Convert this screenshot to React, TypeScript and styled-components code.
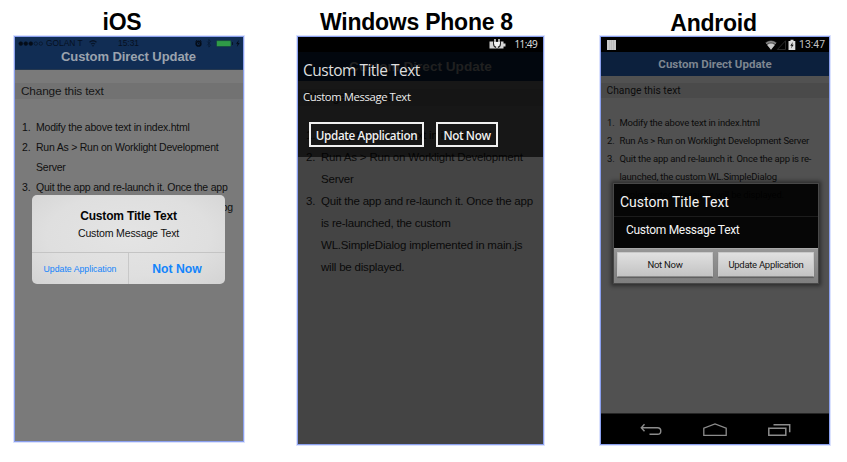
import React from "react";
import styled, { createGlobalStyle } from "styled-components";

const Global = createGlobalStyle`
  body { margin: 0; background: #fff; }
  * { box-sizing: border-box; }
`;

const ARIAL = '"Liberation Sans", Arial, sans-serif';
const SEGOE = '"Open Sans", "Noto Sans", sans-serif';
const ROBOTO = 'Roboto, "Noto Sans", sans-serif';

/* ---------- shared layout ---------- */

const Page = styled.main`
  width: 847px;
  height: 462px;
  overflow: hidden;
  display: grid;
  grid-template-columns: 230px 247px 230px;
  column-gap: 53px;
  padding-left: 14px;
  align-items: start;
  background: #fff;
`;

const Column = styled.section<{ $shift?: number }>`
  display: flex;
  flex-direction: column;
  margin-left: ${(p) => p.$shift ?? 0}px;
  width: 100%;
`;

const Platform = styled.h2<{ $inset: number; $drop?: number }>`
  margin: 0;
  height: 36px;
  padding: ${(p) => 9 + (p.$drop ?? 0)}px ${(p) => p.$inset}px 0 0;
  font: bold 23px/26px ${ARIAL};
  letter-spacing: -0.25px;
  text-align: center;
  white-space: nowrap;
  color: #000;
`;

const Phone = styled.div<{ $height: number; $bg: string; $font: string }>`
  position: relative;
  display: flex;
  flex-direction: column;
  height: ${(p) => p.$height}px;
  border: 1px solid #8ba0ee;
  box-shadow: 0 0 0 1px #dbe2fd;
  background: ${(p) => p.$bg};
  font-family: ${(p) => p.$font};
  overflow: hidden;
  white-space: nowrap;
`;

const AppHeader = styled.header<{ $h: number; $bg: string; $color: string; $size: number; $top?: number; $track?: number }>`
  flex: none;
  height: ${(p) => p.$h}px;
  padding-top: ${(p) => p.$top ?? 0}px;
  background: ${(p) => p.$bg};
  color: ${(p) => p.$color};
  font-size: ${(p) => p.$size}px;
  font-weight: bold;
  line-height: ${(p) => p.$h - (p.$top ?? 0)}px;
  letter-spacing: ${(p) => p.$track ?? 0}px;
  text-align: center;
`;

const Banner = styled.div<{ $top: number; $h: number; $bg: string; $size: number; $left: number; $color: string; $track?: number }>`
  flex: none;
  margin-top: ${(p) => p.$top}px;
  height: ${(p) => p.$h}px;
  line-height: ${(p) => p.$h}px;
  padding-left: ${(p) => p.$left}px;
  background: ${(p) => p.$bg};
  font-size: ${(p) => p.$size}px;
  letter-spacing: ${(p) => p.$track ?? 0}px;
  color: ${(p) => p.$color};
`;

const Steps = styled.ol<{ $top: number; $left: number; $num: number; $line: number; $size: number; $color: string; $track?: number }>`
  list-style: none;
  margin: ${(p) => p.$top}px 0 0;
  padding: 0 0 0 ${(p) => p.$left}px;
  font-size: ${(p) => p.$size}px;
  line-height: ${(p) => p.$line}px;
  letter-spacing: ${(p) => p.$track ?? 0}px;
  color: ${(p) => p.$color};
  li {
    display: grid;
    grid-template-columns: ${(p) => p.$num}px 1fr;
  }
`;

const StepText = styled.span`
  white-space: pre;
`;

function StepList({ steps, ...style }: { steps: string[] } & React.ComponentProps<typeof Steps>) {
  return (
    <Steps {...style}>
      {steps.map((text, i) => (
        <li key={i}>
          <span>{i + 1}.</span>
          <StepText>{text}</StepText>
        </li>
      ))}
    </Steps>
  );
}

/* ---------- iOS ---------- */

const IosHeader = styled.header`
  flex: none;
  height: 33px;
  background: #112d54;
  border-bottom: 1px solid #24374f;
`;

const IosStatus = styled.div`
  display: grid;
  grid-template-columns: 29px 43px 29px 76px 1fr;
  height: 12px;
  padding-left: 2px;
  align-items: center;
  font-size: 8.4px;
  line-height: 12px;
  color: #06101f;
  svg { display: block; }
`;

const IosTitle = styled.div`
  padding-right: 1px;
  font-weight: bold;
  font-size: 13px;
  letter-spacing: -0.08px;
  line-height: 15px;
  text-align: center;
  color: #9ba3ae;
`;

const IosAlert = styled.div`
  position: absolute;
  left: 17px;
  top: 158px;
  width: 193px;
  height: 89px;
  border-radius: 5px;
  background: radial-gradient(ellipse at 50% 45%, #e4e4e4 0%, #dfdfdf 60%, #d3d3d3 100%);
  display: flex;
  flex-direction: column;
  text-align: center;
  color: #111;
`;

const IosAlertText = styled.div`
  height: 57px;
  padding-top: 13px;
`;

const IosAlertTitle = styled.div`
  font: bold 12px/16px ${ARIAL};
  letter-spacing: -0.18px;
  color: #050505;
`;

const IosAlertMessage = styled.div`
  font: 10.6px/18px ${ARIAL};
  letter-spacing: -0.18px;
`;

const IosActions = styled.div`
  flex: 1;
  display: grid;
  grid-template-columns: 96px 1fr;
  border-top: 1px solid #c4c4c4;
`;

const IosAction = styled.button<{ $strong?: boolean }>`
  border: 0;
  border-left: ${(p) => (p.$strong ? "1px solid #c8c8c8" : "0")};
  padding: 0;
  background: none;
  color: #1384fb;
  font-family: ${ARIAL};
  font-size: ${(p) => (p.$strong ? 12.2 : 8.75)}px;
  font-weight: ${(p) => (p.$strong ? "bold" : "normal")};
`;

/* ---------- Windows Phone ---------- */

const WpStatus = styled.div`
  flex: none;
  height: 15px;
  display: flex;
  justify-content: flex-end;
  align-items: center;
  gap: 9px;
  padding-right: 6px;
  background: #000;
  color: #e0e0e0;
  font: 10px/15px ${SEGOE};
  letter-spacing: -0.6px;
`;

const WpDialog = styled.div`
  position: absolute;
  left: 0;
  top: 15px;
  width: 245px;
  height: 105px;
  padding: 7px 0 0 5px;
  background: rgba(0, 0, 0, 0.66);
  font-family: ${SEGOE};
  color: #ececec;
`;

const WpTitle = styled.div`
  font-size: 15.5px;
  font-weight: 400;
  line-height: 22px;
  letter-spacing: -0.5px;
  color: #dedede;
`;

const WpMessage = styled.div`
  margin-top: 7px;
  font-size: 11.3px;
  line-height: 18px;
  letter-spacing: -0.4px;
`;

const WpActions = styled.div`
  display: flex;
  gap: 12px;
  margin: 16px 0 0 6px;
`;

const WpButton = styled.button<{ $w: number }>`
  width: ${(p) => p.$w}px;
  height: 25px;
  padding: 0;
  border: 2px solid #f0f0f0;
  background: transparent;
  color: #f0f0f0;
  font: 600 11.7px/20px ${SEGOE};
  letter-spacing: -0.38px;
  white-space: nowrap;
`;

/* ---------- Android ---------- */

const AndroidStatus = styled.div`
  flex: none;
  height: 15px;
  display: flex;
  align-items: center;
  padding: 0 4px 0 6px;
  background: #000;
  color: #c2c2c2;
  font: 10.4px/15px ${ROBOTO};
  svg { display: block; }
`;

const Spacer = styled.span`
  flex: 1;
`;

const AndroidClock = styled.span`
  margin-left: 3px;
`;

const AndroidDialog = styled.div`
  position: absolute;
  left: 12px;
  top: 146px;
  width: 206px;
  height: 101px;
  border: 1px solid #484848;
  display: flex;
  flex-direction: column;
  background: rgba(0, 0, 0, 0.92);
  box-shadow: 0 0 4px 2px rgba(0, 0, 0, 0.45);
  color: #f4f4f4;
`;

const AndroidTitle = styled.div`
  height: 33px;
  padding: 2px 0 0 6px;
  border-bottom: 1px solid #1c1c1c;
  font-size: 14px;
  line-height: 33px;
`;

const AndroidMessage = styled.div`
  height: 31px;
  padding-left: 12px;
  font-size: 12px;
  line-height: 26px;
  letter-spacing: -0.3px;
`;

const AndroidActions = styled.div`
  flex: 1;
  display: grid;
  grid-template-columns: 96px 96px;
  column-gap: 5px;
  padding: 3px 0 6px 3px;
  border-top: 1px solid #a8a8a8;
  background: linear-gradient(#969696, #7f7f7f);
`;

const AndroidButton = styled.button`
  padding: 0;
  border: 1px solid #c9c9c9;
  border-bottom-color: #8a8a8a;
  border-radius: 1px;
  background: linear-gradient(#e0e0e0, #c3c3c3);
  box-shadow: 0 1px 1px rgba(0, 0, 0, 0.3);
  color: #161616;
  font: 9.5px/22px ${ROBOTO};
  letter-spacing: -0.28px;
`;

const NavBar = styled.nav`
  margin-top: auto;
  height: 31px;
  display: flex;
  justify-content: center;
  align-items: center;
  gap: 41px;
  padding-top: 1px;
  border-top: 1px solid #252525;
  background: #000;
`;

/* ---------- icons ---------- */

const SignalDots = () => (
  <svg width="28" height="12" viewBox="0 0 28 12" fill="#040c18" stroke="#06101f" strokeWidth=".6">
    <circle cx="3.8" cy="6.6" r="1.9" />
    <circle cx="8.8" cy="6.6" r="1.9" />
    <circle cx="13.8" cy="6.6" r="1.9" />
    <circle cx="18.8" cy="6.6" r="1.7" fill="none" />
    <circle cx="23.8" cy="6.6" r="1.7" fill="none" />
  </svg>
);

const IosWifi = () => (
  <svg width="8" height="12" viewBox="0 0 8 12" fill="none" stroke="#071426" strokeWidth="1.2">
    <path d="M.5 5.3Q4 2.2 7.5 5.3M2 7.1Q4 5.4 6 7.1" />
    <path d="M3.1 8.3h1.8L4 9.6z" fill="#071426" strokeWidth=".3" />
  </svg>
);

const IosIndicators = () => (
  <svg width="48" height="12" viewBox="0 0 48 12">
    <circle cx="4.5" cy="6.7" r="2.3" fill="none" stroke="#040c18" strokeWidth="1.7" />
    <path d="M1.5 4.6L3 3.3M7.5 4.6L6 3.3M4.5 5.6v1.300h1" stroke="#040c18" strokeWidth="1" fill="none" />
    <path d="M13.2 4.500l3.400 3.700-1.700 1.900V2.600l1.700 1.800-3.400 3.900" stroke="#071a33" strokeWidth=".8" fill="none" />
    <rect x="22.500" y="3.600" width="14.500" height="6" rx="1" fill="#2f9b47" stroke="#153f3d" strokeWidth=".7" />
    <path d="M38.500 5.200v2.700" stroke="#071426" strokeWidth="1" />
    <path d="M44.800 3l-2.700 3.800h1.600L42.800 10l2.900-4h-1.600z" fill="#040c18" />
  </svg>
);

const WpBattery = () => (
  <svg width="17" height="11" viewBox="0 0 17 11">
    <path d="M.5 2.500h14v2h2v3h-2v2H.500z" fill="#d4d4d4" />
    <path d="M4 2h8v3q0 3.500-4 4.500-4-1-4-4.500z" fill="#222" />
    <path d="M6 0v3M10 0v3" stroke="#eee" strokeWidth="1.400" />
    <path d="M5 3h6v1.500q0 2.500-2.200 3V9H7.200V7.500Q5 7 5 4.500z" fill="#f2f2f2" />
  </svg>
);

const BarsBadge = () => (
  <svg width="9" height="10" viewBox="0 0 9 10">
    <rect width="9" height="10" fill="#c9c9c9" />
    <path d="M2.500 0v10M4.500 0v10M6.500 0v10" stroke="#adadad" strokeWidth=".5" />
  </svg>
);

const AndroidSignals = () => (
  <svg width="31" height="12" viewBox="0 0 31 12">
    <path d="M.3 3.600Q6 -.8 11.700 3.600L6 10.800z" fill="#555" />
    <path d="M2.200 5.900Q6 3.100 9.800 5.900L6 10.800z" fill="#c8c8c8" />
    <path d="M1.200 4.500Q6 .9 10.800 4.500" fill="none" stroke="#a0a0a0" strokeWidth=".9" />
    <path d="M20.500 1.800v8.700h-8.200z" fill="none" stroke="#343434" strokeWidth=".8" />
    <path d="M23.500 2h2V.8h3V2h1.800v9h-6.800z" fill="#dcdcdc" />
    <path d="M27.800 3l-2.500 3.700h1.500L26 9.600l2.700-3.900h-1.500z" fill="#111" />
  </svg>
);

const BackIcon = () => (
  <svg width="22" height="14" viewBox="0 0 22 14" fill="none" stroke="#8c8c8c" strokeWidth="1.400">
    <path d="M4.500 1.200L1.300 4.700l3.200 3.500M1.300 4.700H17.500q3.300 0 3.300 3.300t-3.300 3.300H9.500" />
  </svg>
);

const HomeIcon = () => (
  <svg width="24" height="14" viewBox="0 0 24 14" fill="none" stroke="#8c8c8c" strokeWidth="1.300">
    <path d="M.8 12.300V5.200L12 1l11.200 4.200v7.100z" />
  </svg>
);

const RecentsIcon = () => (
  <svg width="23" height="14" viewBox="0 0 23 14" fill="none" stroke="#8c8c8c" strokeWidth="1.500">
    <path d="M.8 5.200h17v7H.8zM5.500 1.800h16.200v7.500" />
  </svg>
);

/* ---------- screens ---------- */

const IosScreen = () => (
  <Phone $height={406} $bg="#7a7a7a" $font={ARIAL}>
    <IosHeader>
      <IosStatus>
        <SignalDots />
        <span>GOLAN T</span>
        <IosWifi />
        <span>15:31</span>
        <IosIndicators />
      </IosStatus>
      <IosTitle>Custom Direct Update</IosTitle>
    </IosHeader>
    <Banner $top={13} $h={16} $bg="#727272" $size={11.8} $track={-0.17} $left={6} $color="#161616">
      Change this text
    </Banner>
    <StepList
      $top={18} $left={7} $num={14} $line={20} $size={10.5} $track={-0.23} $color="#101010"
      steps={[
        "Modify the above text in index.html",
        "Run As > Run on Worklight Development\nServer",
        "Quit the app and re-launch it. Once the app\nis re-launched, the custom WL.SimpleDialog",
      ]}
    />
    <IosAlert>
      <IosAlertText>
        <IosAlertTitle>Custom Title Text</IosAlertTitle>
        <IosAlertMessage>Custom Message Text</IosAlertMessage>
      </IosAlertText>
      <IosActions>
        <IosAction>Update Application</IosAction>
        <IosAction $strong>Not Now</IosAction>
      </IosActions>
    </IosAlert>
  </Phone>
);

const WindowsScreen = () => (
  <Phone $height={409} $bg="#444" $font={ARIAL}>
    <WpStatus>
      <WpBattery />
      <span>11:49</span>
    </WpStatus>
    <AppHeader $h={29} $bg="#061629" $color="#5e5e5e" $size={13.6}>
      Custom Direct Update
    </AppHeader>
    <Banner $top={8} $h={17} $bg="#3e3e3e" $size={12} $left={6} $color="#0c0c0c">
      Change this text
    </Banner>
    <StepList
      $top={18} $left={8} $num={15} $line={22} $size={11.5} $track={-0.2} $color="#0a0a0a"
      steps={[
        "Modify the above text in index.html",
        "Run As > Run on Worklight Development\nServer",
        "Quit the app and re-launch it. Once the app\nis re-launched, the custom\nWL.SimpleDialog implemented in main.js\nwill be displayed.",
      ]}
    />
    <WpDialog>
      <WpTitle>Custom Title Text</WpTitle>
      <WpMessage>Custom Message Text</WpMessage>
      <WpActions>
        <WpButton $w={115}>Update Application</WpButton>
        <WpButton $w={62}>Not Now</WpButton>
      </WpActions>
    </WpDialog>
  </Phone>
);

const AndroidScreen = () => (
  <Phone $height={409} $bg="#515151" $font={ROBOTO}>
    <AndroidStatus>
      <BarsBadge />
      <Spacer />
      <AndroidSignals />
      <AndroidClock>13:47</AndroidClock>
    </AndroidStatus>
    <AppHeader $h={24} $top={1} $bg="#0c203d" $color="#7e8690" $size={11.5}>
      Custom Direct Update
    </AppHeader>
    <Banner $top={7} $h={15} $bg="#4a4a4a" $size={10.3} $left={5.5} $color="#0c0c0c">
      Change this text
    </Banner>
    <StepList
      $top={15.5} $left={6} $num={12.5} $line={18} $size={9.5} $track={-0.2} $color="#0c0c0c"
      steps={[
        "Modify the above text in index.html",
        "Run As > Run on Worklight Development Server",
        "Quit the app and re-launch it. Once the app is re-\nlaunched, the custom WL.SimpleDialog\nimplemented in main.js will be displayed.",
      ]}
    />
    <AndroidDialog>
      <AndroidTitle>Custom Title Text</AndroidTitle>
      <AndroidMessage>Custom Message Text</AndroidMessage>
      <AndroidActions>
        <AndroidButton>Not Now</AndroidButton>
        <AndroidButton>Update Application</AndroidButton>
      </AndroidActions>
    </AndroidDialog>
    <NavBar>
      <BackIcon />
      <HomeIcon />
      <RecentsIcon />
    </NavBar>
  </Phone>
);

export default function App() {
  return (
    <>
      <Global />
      <Page>
        <Column>
          <Platform $inset={14}>iOS</Platform>
          <IosScreen />
        </Column>
        <Column>
          <Platform $inset={8}>Windows Phone 8</Platform>
          <WindowsScreen />
        </Column>
        <Column $shift={3}>
          <Platform $inset={3} $drop={1}>Android</Platform>
          <AndroidScreen />
        </Column>
      </Page>
    </>
  );
}
